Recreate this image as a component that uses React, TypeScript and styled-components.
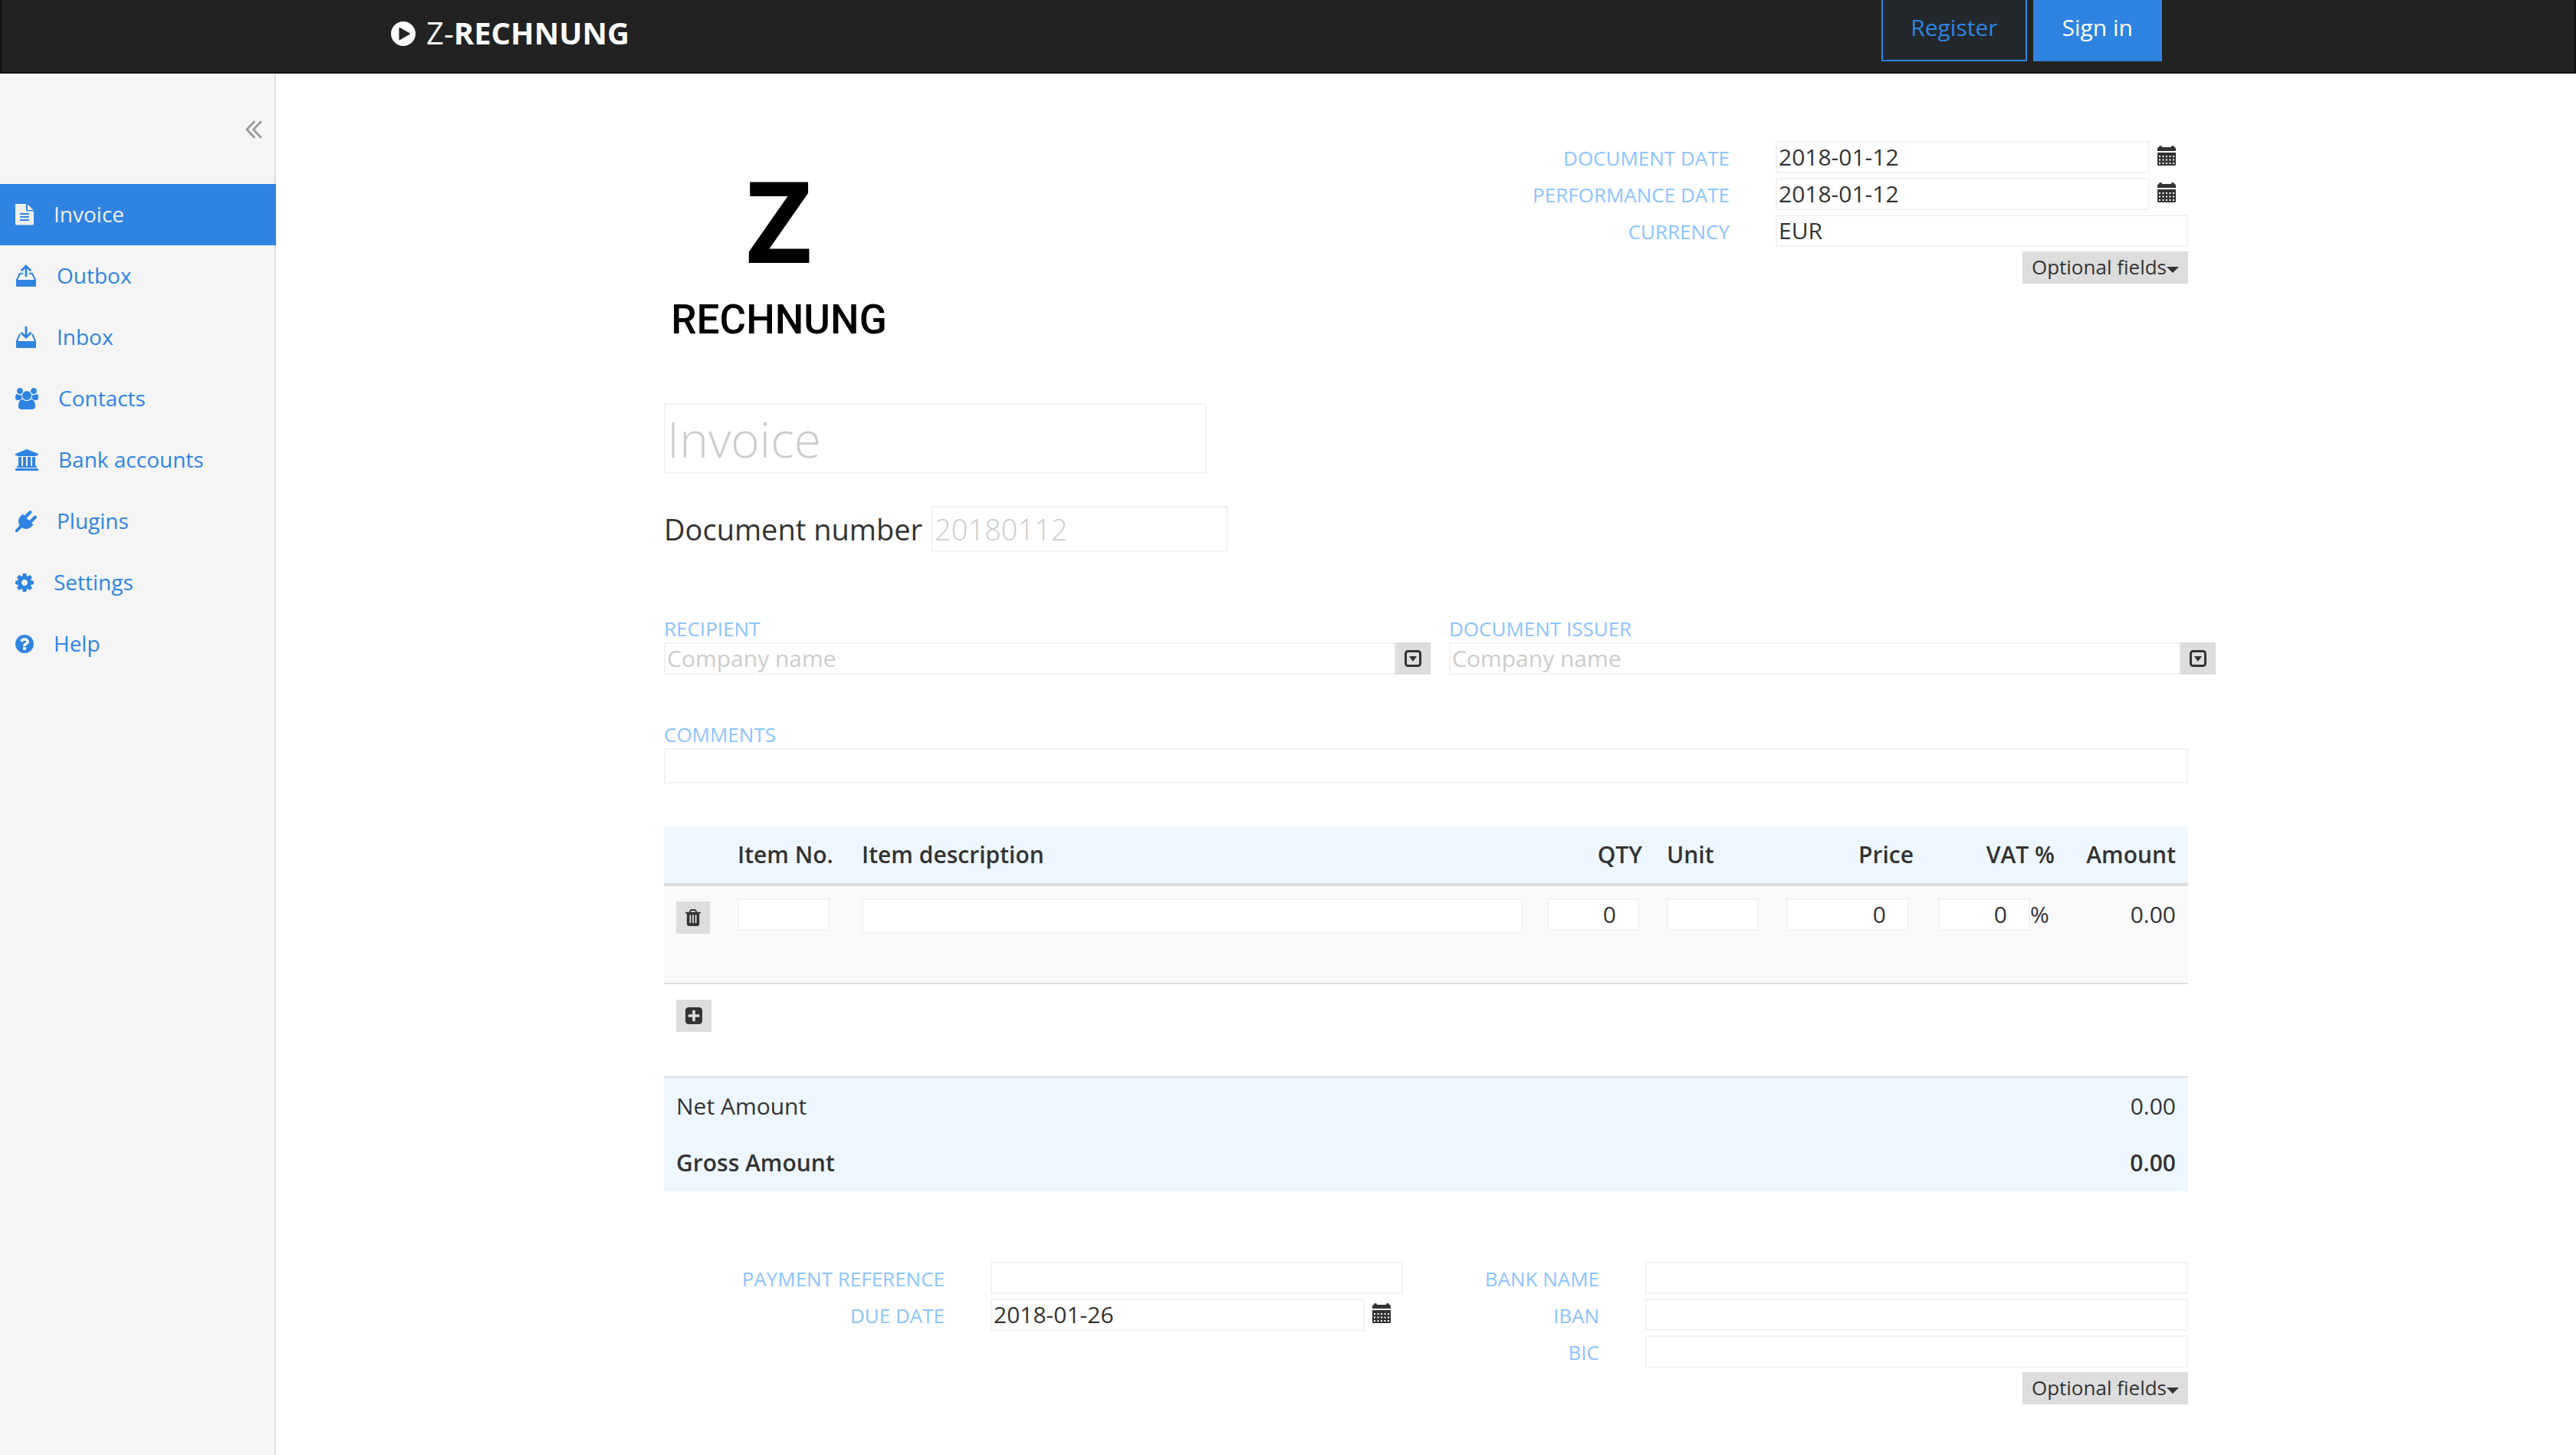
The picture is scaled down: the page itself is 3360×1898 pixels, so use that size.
import React from "react";
import styled, { createGlobalStyle, css } from "styled-components";

const color = {
  blue: "#2f84e1",
  label: "#8ac4ff",
  text: "#333",
  hint: "#ccc",
  line: "#ddd",
  field: "#f2f2f2",
  tint: "#eef7ff",
};

const GlobalStyle = createGlobalStyle`
  *, *::before, *::after { box-sizing: border-box; }
  body {
    margin: 0;
    background: #fff;
    color: ${color.text};
    font: 400 30px/42px "Open Sans", "Noto Sans", sans-serif;
  }
  button, input, textarea { font: inherit; color: inherit; border-radius: 0; }
  svg { display: block; flex: none; fill: currentColor; }
`;

/* ---------- icons ---------- */

type IconProps = { size?: number };

const glyph = (x: number, width: number, d: string) =>
  function Glyph({ size = 28 }: IconProps) {
    return (
      <svg
        viewBox={`${x} 0 ${width} 1792`}
        width={Math.round((size * width) / 1792)}
        height={size}
        aria-hidden="true"
      >
        <path d={d} />
      </svg>
    );
  };

const FileIcon = glyph(
  128,
  1536,
  "M1596 476q14 14 28 36h-472v-472q22 14 36 28zm-572 36q0 40 28 68t68 28h544v1056q0 40-28 68t-68 28h-1344q-40 0-68-28t-28-68v-1600q0-40 28-68t68-28h800v544zm256 864v-64q0-14-9-23t-23-9h-704q-14 0-23 9t-9 23v64q0 14 9 23t23 9h704q14 0 23-9t9-23zm0-256v-64q0-14-9-23t-23-9h-704q-14 0-23 9t-9 23v64q0 14 9 23t23 9h704q14 0 23-9t9-23zm0-256v-64q0-14-9-23t-23-9h-704q-14 0-23 9t-9 23v64q0 14 9 23t23 9h704q14 0 23-9t9-23z"
);

const UsersIcon = glyph(
  -64,
  1920,
  "M529 896q-162 5-265 128h-134q-82 0-138-40.5t-56-118.5q0-353 124-353 6 0 43.5 21t97.5 42.5 119 21.5q67 0 133-23-5 37-5 66 0 139 81 256zm1071 637q0 120-73 189.5t-194 69.5h-874q-121 0-194-69.5t-73-189.5q0-53 3.5-103.5t14-109 26.5-108.5 43-97.5 62-81 85.5-53.5 111.5-20q10 0 43 21.5t73 48 107 48 135 21.5 135-21.5 107-48 73-48 43-21.5q61 0 111.5 20t85.5 53.5 62 81 43 97.5 26.5 108.5 14 109 3.5 103.5zm-1024-1277q0 106-75 181t-181 75-181-75-75-181 75-181 181-75 181 75 75 181zm704 384q0 159-112.5 271.5t-271.5 112.5-271.5-112.5-112.5-271.5 112.5-271.5 271.5-112.5 271.5 112.5 112.5 271.5zm576 225q0 78-56 118.5t-138 40.5h-134q-103-123-265-128 81-117 81-256 0-29-5-66 66 23 133 23 59 0 119-21.5t97.5-42.5 43.5-21q124 0 124 353zm-128-609q0 106-75 181t-181 75-181-75-75-181 75-181 181-75 181 75 75 181z"
);

const BankIcon = glyph(
  -128,
  1920,
  "M832 0l960 384v128h-128q0 26-20.5 45t-48.5 19h-1526q-28 0-48.5-19t-20.5-45h-128v-128zm-704 640h256v768h128v-768h256v768h128v-768h256v768h128v-768h256v768h59q28 0 48.5 19t20.5 45v64h-1664v-64q0-26 20.5-45t48.5-19h59v-768zm1595 960q28 0 48.5 19t20.5 45v128h-1920v-128q0-26 20.5-45t48.5-19h1782z"
);

const PlugIcon = glyph(
  0,
  1792,
  "M1755 453q37 38 37 90.5t-37 90.5l-401 400 150 150-160 160q-163 163-389.5 186.5t-411.5-100.5l-362 362h-181v-181l362-362q-124-185-100.5-411.5t186.5-389.5l160-160 150 150 400-401q38-37 91-37t90 37 37 90.5-37 90.5l-400 401 234 234 401-400q38-37 91-37t90 37z"
);

const CogIcon = glyph(
  128,
  1536,
  "M1152 896q0-106-75-181t-181-75-181 75-75 181 75 181 181 75 181-75 75-181zm512-109v222q0 12-8 23t-20 13l-185 28q-19 54-39 91 35 50 107 138 10 12 10 25t-9 23q-27 37-99 108t-94 71q-12 0-26-9l-138-108q-44 23-91 38-16 136-29 186-7 28-36 28h-222q-14 0-24.5-8.5t-11.5-21.5l-28-184q-49-16-90-37l-141 107q-10 9-25 9-14 0-25-11-126-114-165-168-7-10-7-23 0-12 8-23 15-21 51-66.5t54-70.5q-27-50-41-99l-183-27q-13-2-21-12.5t-8-23.5v-222q0-12 8-23t19-13l186-28q14-46 39-92-40-57-107-138-10-12-10-24 0-10 9-23 26-36 98.5-107.5t94.5-71.5q13 0 26 10l138 107q44-23 91-38 16-136 29-186 7-28 36-28h222q14 0 24.5 8.5t11.5 21.5l28 184q49 16 90 37l142-107q9-9 24-9 13 0 25 10 129 119 165 170 7 8 7 22 0 12-8 23-15 21-51 66.5t-54 70.5q26 50 41 98l183 28q13 2 21 12.5t8 23.5z"
);

const HelpIcon = glyph(
  128,
  1536,
  "M1024 1376v-192q0-14-9-23t-23-9h-192q-14 0-23 9t-9 23v192q0 14 9 23t23 9h192q14 0 23-9t9-23zm256-672q0-88-55.5-163t-138.5-116-170-41q-243 0-371 213-15 24 8 42l132 100q7 6 19 6 16 0 25-12 53-68 86-92 34-24 86-24 48 0 85.5 26t37.5 59q0 38-20 61t-68 45q-63 28-115.5 86.5t-52.5 125.5v36q0 14 9 23t23 9h192q14 0 23-9t9-23q0-19 21.5-49.5t54.5-49.5q32-18 49-28.5t46-35 44.5-48 28-60.5 12.5-81zm384 192q0 209-103 385.5t-279.5 279.5-385.5 103-385.5-103-279.5-279.5-103-385.5 103-385.5 279.5-279.5 385.5-103 385.5 103 279.5 279.5 103 385.5z"
);

const TrashIcon = glyph(
  192,
  1408,
  "M704 1376v-704q0-14-9-23t-23-9h-64q-14 0-23 9t-9 23v704q0 14 9 23t23 9h64q14 0 23-9t9-23zm256 0v-704q0-14-9-23t-23-9h-64q-14 0-23 9t-9 23v704q0 14 9 23t23 9h64q14 0 23-9t9-23zm256 0v-704q0-14-9-23t-23-9h-64q-14 0-23 9t-9 23v704q0 14 9 23t23 9h64q14 0 23-9t9-23zm-544-992h448l-48-117q-7-9-17-11h-317q-10 2-17 11zm928 32v64q0 14-9 23t-23 9h-96v948q0 83-47 143.5t-113 60.5h-832q-66 0-113-58.5t-47-141.5v-952h-96q-14 0-23-9t-9-23v-64q0-14 9-23t23-9h309l70-167q15-37 54-63t79-26h320q40 0 79 26t54 63l70 167h309q14 0 23 9t9 23z"
);

const PlusIcon = glyph(
  128,
  1536,
  "M1408 960v-128q0-26-19-45t-45-19h-320v-320q0-26-19-45t-45-19h-128q-26 0-45 19t-19 45v320h-320q-26 0-45 19t-19 45v128q0 26 19 45t45 19h320v320q0 26 19 45t45 19h128q26 0 45-19t19-45v-320h320q26 0 45-19t19-45zm256-544v960q0 119-84.5 203.5t-203.5 84.5h-960q-119 0-203.5-84.5t-84.5-203.5v-960q0-119 84.5-203.5t203.5-84.5h960q119 0 203.5 84.5t84.5 203.5z"
);

const OutboxIcon = () => (
  <svg viewBox="0 0 28 30" width={28} height={30} aria-hidden="true">
    <path d="M1 20 h26 v7.5 a1.5 1.5 0 0 1 -1.5 1.5 h-23 a1.5 1.5 0 0 1 -1.5 -1.5 z" />
    <path
      d="M2 20 L6 11.7 H9.5 M18.5 11.7 H22 L26 20"
      fill="none"
      stroke="currentColor"
      strokeWidth="2"
      strokeLinecap="round"
      strokeLinejoin="round"
    />
    <path
      d="M14 15 V3 M8.5 7.5 L14 2 L19.5 7.5"
      fill="none"
      stroke="currentColor"
      strokeWidth="2.8"
      strokeLinecap="round"
    />
  </svg>
);

const InboxIcon = () => (
  <svg viewBox="0 0 28 30" width={28} height={30} aria-hidden="true">
    <path d="M1 20 h26 v7.5 a1.5 1.5 0 0 1 -1.5 1.5 h-23 a1.5 1.5 0 0 1 -1.5 -1.5 z" />
    <path
      d="M2 20 L5.6 11.5 M22.4 11.5 L26 20"
      fill="none"
      stroke="currentColor"
      strokeWidth="2"
      strokeLinecap="round"
    />
    <path
      d="M14 2 V14 M8.2 9.5 L14 15 L19.8 9.5"
      fill="none"
      stroke="currentColor"
      strokeWidth="2.8"
      strokeLinecap="round"
    />
  </svg>
);

const CalendarIcon = () => (
  <svg viewBox="0 0 24 26" width={24} height={26} aria-hidden="true">
    <path
      fillRule="evenodd"
      d="M0 7 V4 q0-2 2-2 V1.500 q0-1.500 2-1.500 t2 1.500 V2 H18 V1.500 q0-1.500 2-1.500 t2 1.500 V2 q2 0 2 2 V7 Z
         M0 9 H24 V24.500 q0 1.500-1.500 1.500 H1.500 q-1.500 0-1.500-1.500 Z
         M2 13h2v2h-2z M6.500 13h2v2h-2z M11 13h2v2h-2z M15.500 13h2v2h-2z M20 13h2v2h-2z
         M2 17.500h2v2h-2z M6.500 17.500h2v2h-2z M11 17.500h2v2h-2z M15.500 17.500h2v2h-2z M20 17.500h2v2h-2z
         M2 22h2v2h-2z M6.500 22h2v2h-2z M11 22h2v2h-2z M15.500 22h2v2h-2z M20 22h2v2h-2z"
    />
  </svg>
);

const PickIcon = () => (
  <svg viewBox="0 0 22 22" width={22} height={22} aria-hidden="true">
    <rect x="1.500" y="1.500" width="19" height="19" rx="3" fill="none" stroke="currentColor" strokeWidth="3" />
    <path d="M6 8 H16 L11 15 Z" />
  </svg>
);

const CaretIcon = () => (
  <svg viewBox="0 0 16 8" width={16} height={8} aria-hidden="true">
    <path d="M0 0 H16 L8 8 Z" />
  </svg>
);

const PlayIcon = () => (
  <svg viewBox="0 0 32 32" width={32} height={32} aria-hidden="true">
    <path
      fillRule="evenodd"
      d="M16 0 a16 16 0 1 1 0 32 a16 16 0 1 1 0-32 Z M11.500 8 q-1-.5-1 .8 V23.500 q0 1.300 1 .7 L24.500 16.700 q1-.7 0-1.400 Z"
    />
  </svg>
);

const CollapseIcon = () => (
  <svg viewBox="0 0 22 24" width={22} height={24} aria-hidden="true">
    <path
      d="M11.500 2 L2 12 L11.500 22 M20 2 L10.500 12 L20 22"
      fill="none"
      stroke="currentColor"
      strokeWidth="2.800"
      strokeLinecap="round"
      strokeLinejoin="round"
    />
  </svg>
);

/* ---------- header ---------- */

const Header = styled.header`
  height: 96px;
  background: #222;
  border: 2px solid #111;
  border-top: 0;
`;

const HeaderInner = styled.div`
  display: flex;
  justify-content: space-between;
  align-items: flex-start;
  max-width: 2340px;
  margin: 0 auto;
  padding-right: 30px;
`;

const Brand = styled.a`
  display: flex;
  align-items: center;
  gap: 14px;
  height: 88px;
  color: #fff;
  font-size: 40px;
  text-decoration: none;
`;

const BrandName = styled.span`
  padding-bottom: 2px;
`;

const Account = styled.nav`
  display: flex;
  gap: 8px;
`;

const AccountLink = styled.a<{ $filled?: boolean }>`
  height: 80px;
  padding: 15px 36px 0;
  border: 2px solid ${color.blue};
  border-top: 0;
  background: ${(p) => (p.$filled ? color.blue : "#23282c")};
  color: ${(p) => (p.$filled ? "#fff" : color.blue)};
  text-decoration: none;
`;

/* ---------- sidebar ---------- */

const Body = styled.div`
  display: grid;
  grid-template-columns: 360px minmax(0, 1fr);
  min-height: calc(100vh - 96px);
`;

const Sidebar = styled.aside`
  background: #f5f5f5;
  box-shadow: inset -2px 0 ${color.line};
`;

const SidebarTop = styled.div`
  display: flex;
  justify-content: flex-end;
  height: 144px;
  padding: 61px 18px 0 0;
`;

const Collapse = styled.button`
  height: 24px;
  padding: 0;
  border: 0;
  background: none;
  color: #999;
`;

const NavLink = styled.a<{ $active?: boolean }>`
  display: flex;
  align-items: center;
  gap: 26px;
  height: 80px;
  padding-left: 20px;
  font-size: 28px;
  text-decoration: none;
  color: ${(p) => (p.$active ? "#eee" : color.blue)};
  background: ${(p) => (p.$active ? color.blue : "transparent")};
`;

const NavText = styled.span`
  padding-bottom: 2px;
`;

/* ---------- form parts ---------- */

const Main = styled.main`
  padding: 88px 30px 66px;
`;

const Form = styled.form`
  max-width: 1988px;
  margin: 0 auto;
`;

const fieldBox = css`
  display: block;
  width: 100%;
  min-width: 0;
  height: 42px;
  padding: 0 2px;
  border: 2px solid ${color.field};
  background: #fff;
  outline: 0;
  &::placeholder { color: ${color.hint}; opacity: 1; }
`;

const Input = styled.input<{ $max?: number }>`
  ${fieldBox}
  max-width: ${(p) => (p.$max ? `${p.$max}px` : "none")};
`;

const TextArea = styled.textarea`
  ${fieldBox}
  height: 46px;
  resize: none;
  overflow: hidden;
`;

const NumberInput = styled(Input)`
  padding-right: 28px;
  text-align: right;
`;

const TitleInput = styled(Input)`
  height: 92px;
  font-size: 64px;
  font-weight: 300;
`;

const DocNumberInput = styled(Input)`
  width: 386px;
  height: 60px;
  font-weight: 300;
`;

const Label = styled.label`
  color: ${color.label};
  font-size: 26px;
  line-height: 36px;
  text-transform: uppercase;
  white-space: nowrap;
`;

const Stack = styled.div`
  display: flex;
  flex-direction: column;
  min-width: 0;
`;

const FieldGrid = styled.div<{ $field: number }>`
  display: grid;
  grid-template-columns: max-content minmax(0, ${(p) => p.$field}px);
  justify-content: end;
  align-content: start;
  align-items: center;
  gap: 6px 60px;
  ${Label} { padding-top: 2px; text-align: right; }
`;

const DateField = styled.div`
  display: grid;
  grid-template-columns: minmax(0, 1fr) 50px;
`;

const IconButton = styled.button`
  display: flex;
  align-items: flex-start;
  height: 42px;
  padding: 6px 10px 0;
  border: 0;
  background: none;
`;

const GreyButton = styled.button`
  display: inline-flex;
  align-items: center;
  height: 42px;
  padding: 0 12px;
  border: 0;
  background: ${color.line};
  font-size: 26px;
  line-height: 36px;
`;

const OptionalButton = styled(GreyButton)`
  grid-column: 2;
  justify-self: end;
  padding-bottom: 2px;
  svg { margin-top: 8px; }
`;

const TopRow = styled.div`
  display: grid;
  grid-template-columns: 300px minmax(0, 1fr);
  min-height: 342px;
`;

const Logo = styled.div`
  display: flex;
  flex-direction: column;
  align-items: center;
  padding-top: 22px;
  color: #000;
`;

const LogoMark = styled.span`
  font-size: 148px;
  font-weight: 700;
  line-height: 160px;
`;

const LogoWord = styled.span`
  font-family: Roboto, sans-serif;
  font-size: 53px;
  font-weight: 500;
  line-height: 102px;
`;

const DocNumberRow = styled.div`
  display: flex;
  align-items: center;
  gap: 12px;
  margin-top: 42px;
  font-size: 38px;
  line-height: 60px;
`;

const Parties = styled.div`
  display: grid;
  grid-template-columns: 1fr 1fr;
  gap: 24px;
  margin: 82px -36px 0 0;
`;

const PickRow = styled.div`
  display: grid;
  grid-template-columns: minmax(0, 1fr) 46px;
`;

const Comments = styled(Stack)`
  margin-top: 60px;
`;

/* ---------- items table ---------- */

const Table = styled.table`
  width: 100%;
  margin-top: 56px;
  border-collapse: separate;
  border-spacing: 0;
  table-layout: fixed;
`;

const Col = styled.col<{ $w?: number }>`
  width: ${(p) => (p.$w ? `${p.$w}px` : "auto")};
`;

const Th = styled.th<{ $right?: boolean }>`
  height: 78px;
  padding: 0 16px;
  border-bottom: 4px solid ${color.line};
  background: ${color.tint};
  font-weight: 600;
  text-align: ${(p) => (p.$right ? "right" : "left")};
  white-space: nowrap;
`;

const Td = styled.td<{ $right?: boolean }>`
  height: 128px;
  padding: 16px 16px 0;
  border-bottom: 2px solid ${color.line};
  background: #f9f9f9;
  vertical-align: top;
  text-align: ${(p) => (p.$right ? "right" : "left")};
`;

const ActionTd = styled(Td)`
  padding-top: 20px;
`;

const AddTd = styled(ActionTd)`
  height: 122px;
  background: #fff;
`;

const TotalTd = styled.td<{ $bold?: boolean; $right?: boolean }>`
  height: 74px;
  padding: 0 16px;
  background: ${color.tint};
  font-weight: ${(p) => (p.$bold ? 600 : 400)};
  text-align: ${(p) => (p.$right ? "right" : "left")};
`;

const VatCell = styled.div`
  display: flex;
`;

const Bottom = styled.div`
  display: grid;
  grid-template-columns: 964px minmax(0, 1fr);
  margin-top: 92px;
`;

/* ---------- page ---------- */

const navItems = [
  { text: "Invoice", Icon: FileIcon, active: true },
  { text: "Outbox", Icon: OutboxIcon },
  { text: "Inbox", Icon: InboxIcon },
  { text: "Contacts", Icon: UsersIcon },
  { text: "Bank accounts", Icon: BankIcon },
  { text: "Plugins", Icon: PlugIcon },
  { text: "Settings", Icon: CogIcon },
  { text: "Help", Icon: HelpIcon },
];

function DateInput({ id, value }: { id: string; value: string }) {
  return (
    <DateField>
      <Input id={id} defaultValue={value} />
      <IconButton type="button" aria-label="Pick a date">
        <CalendarIcon />
      </IconButton>
    </DateField>
  );
}

function Party({ id, label }: { id: string; label: string }) {
  return (
    <Stack>
      <Label htmlFor={id}>{label}</Label>
      <PickRow>
        <Input id={id} placeholder="Company name" />
        <GreyButton type="button" aria-label="Choose contact">
          <PickIcon />
        </GreyButton>
      </PickRow>
    </Stack>
  );
}

function OptionalFields() {
  return (
    <OptionalButton type="button">
      Optional fields
      <CaretIcon />
    </OptionalButton>
  );
}

export default function App() {
  return (
    <>
      <GlobalStyle />
      <Header>
        <HeaderInner>
          <Brand href="#">
            <PlayIcon />
            <BrandName>
              Z-<b>RECHNUNG</b>
            </BrandName>
          </Brand>
          <Account>
            <AccountLink href="#">Register</AccountLink>
            <AccountLink href="#" $filled>
              Sign in
            </AccountLink>
          </Account>
        </HeaderInner>
      </Header>
      <Body>
        <Sidebar>
          <SidebarTop>
            <Collapse type="button" aria-label="Collapse menu">
              <CollapseIcon />
            </Collapse>
          </SidebarTop>
          <nav>
            {navItems.map(({ text, Icon, active }) => (
              <NavLink key={text} href="#" $active={active}>
                <Icon />
                <NavText>{text}</NavText>
              </NavLink>
            ))}
          </nav>
        </Sidebar>
        <Main>
          <Form>
            <TopRow>
              <Logo>
                <LogoMark>Z</LogoMark>
                <LogoWord>RECHNUNG</LogoWord>
              </Logo>
              <FieldGrid $field={538}>
                <Label htmlFor="doc-date">Document date</Label>
                <DateInput id="doc-date" value="2018-01-12" />
                <Label htmlFor="perf-date">Performance date</Label>
                <DateInput id="perf-date" value="2018-01-12" />
                <Label htmlFor="currency">Currency</Label>
                <Input id="currency" defaultValue="EUR" />
                <OptionalFields />
              </FieldGrid>
            </TopRow>

            <TitleInput $max={708} aria-label="Title" placeholder="Invoice" />
            <DocNumberRow>
              <label htmlFor="doc-number">Document number</label>
              <DocNumberInput id="doc-number" placeholder="20180112" />
            </DocNumberRow>

            <Parties>
              <Party id="recipient" label="Recipient" />
              <Party id="issuer" label="Document issuer" />
            </Parties>

            <Comments>
              <Label htmlFor="comments">Comments</Label>
              <TextArea id="comments" rows={1} />
            </Comments>

            <Table>
              <colgroup>
                <Col $w={80} />
                <Col $w={162} />
                <Col />
                <Col $w={156} />
                <Col $w={156} />
                <Col $w={198} />
                <Col $w={184} />
                <Col $w={158} />
              </colgroup>
              <thead>
                <tr>
                  <Th aria-label="Actions" />
                  <Th>Item No.</Th>
                  <Th>Item description</Th>
                  <Th $right>QTY</Th>
                  <Th>Unit</Th>
                  <Th $right>Price</Th>
                  <Th $right>VAT %</Th>
                  <Th $right>Amount</Th>
                </tr>
              </thead>
              <tbody>
                <tr>
                  <ActionTd>
                    <GreyButton type="button" aria-label="Delete item">
                      <TrashIcon size={26} />
                    </GreyButton>
                  </ActionTd>
                  <Td>
                    <Input $max={120} aria-label="Item No." />
                  </Td>
                  <Td>
                    <TextArea aria-label="Item description" rows={1} />
                  </Td>
                  <Td>
                    <NumberInput $max={120} aria-label="Quantity" defaultValue="0" />
                  </Td>
                  <Td>
                    <Input $max={120} aria-label="Unit" />
                  </Td>
                  <Td>
                    <NumberInput $max={160} aria-label="Price" defaultValue="0" />
                  </Td>
                  <Td>
                    <VatCell>
                      <NumberInput $max={120} aria-label="VAT" defaultValue="0" />
                      <span>%</span>
                    </VatCell>
                  </Td>
                  <Td $right>0.00</Td>
                </tr>
                <tr>
                  <AddTd colSpan={8}>
                    <GreyButton type="button" aria-label="Add item">
                      <PlusIcon size={26} />
                    </GreyButton>
                  </AddTd>
                </tr>
              </tbody>
              <tfoot>
                <tr>
                  <TotalTd colSpan={7}>Net Amount</TotalTd>
                  <TotalTd $right>0.00</TotalTd>
                </tr>
                <tr>
                  <TotalTd $bold colSpan={7}>
                    Gross Amount
                  </TotalTd>
                  <TotalTd $bold $right>
                    0.00
                  </TotalTd>
                </tr>
              </tfoot>
            </Table>

            <Bottom>
              <FieldGrid $field={538}>
                <Label htmlFor="reference">Payment reference</Label>
                <Input id="reference" />
                <Label htmlFor="due-date">Due date</Label>
                <DateInput id="due-date" value="2018-01-26" />
              </FieldGrid>
              <FieldGrid $field={708}>
                <Label htmlFor="bank">Bank name</Label>
                <Input id="bank" />
                <Label htmlFor="iban">IBAN</Label>
                <Input id="iban" />
                <Label htmlFor="bic">BIC</Label>
                <Input id="bic" />
                <OptionalFields />
              </FieldGrid>
            </Bottom>
          </Form>
        </Main>
      </Body>
    </>
  );
}
